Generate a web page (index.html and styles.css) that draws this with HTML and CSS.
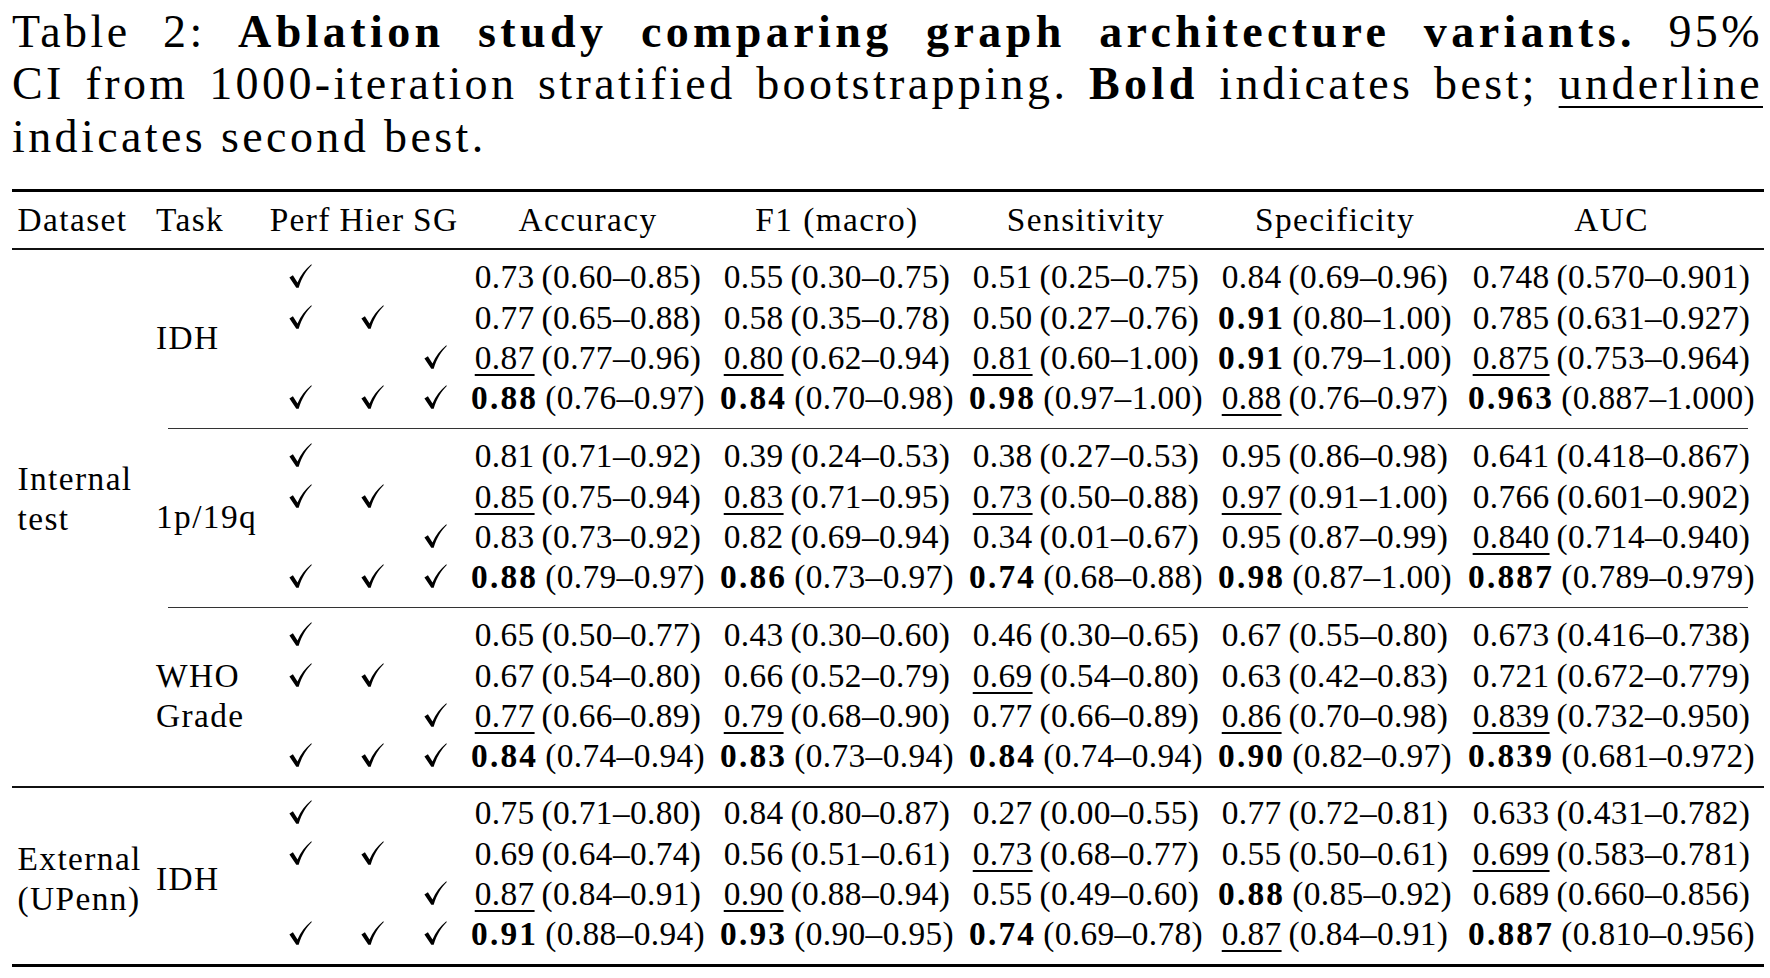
FILE: index.html
```html
<!DOCTYPE html>
<html lang="en">
<head>
    <meta charset="UTF-8">
    <title>Table 2: Ablation study</title>
    <link rel="stylesheet" href="styles.css">
</head>
<body>

<svg class="defs" aria-hidden="true">
    <symbol id="check" viewBox="0 0 23 24">
        <path d="M0.4 13.6 L3.9 11.3 L8.5 18.4 C11.6 11.4 16.2 5.0 22.3 0.2 L22.8 1.1 C17.2 6.6 12.6 14.2 9.7 23.7 L7.3 23.7 Z"/>
    </symbol>
</svg>

<div class="page">
    <p class="caption">
        <span class="line">Table 2: <b>Ablation study comparing graph architecture variants.</b> 95%</span>
        <span class="line">CI from 1000-iteration stratified bootstrapping. <b>Bold</b> indicates best; <u>underline</u></span>
        indicates second best.
    </p>

    <table class="results">
        <colgroup>
            <col class="c-dataset">
            <col class="c-task">
            <col class="c-perf">
            <col class="c-hier">
            <col class="c-sg">
            <col class="c-metric">
            <col class="c-metric">
            <col class="c-metric">
            <col class="c-metric">
            <col class="c-auc">
        </colgroup>
        <thead>
            <tr>
                <th class="lbl">Dataset</th>
                <th class="lbl">Task</th>
                <th class="mid">Perf</th>
                <th class="mid">Hier</th>
                <th class="mid">SG</th>
                <th class="mid">Accuracy</th>
                <th class="mid">F1 (macro)</th>
                <th class="mid">Sensitivity</th>
                <th class="mid">Specificity</th>
                <th class="mid">AUC</th>
            </tr>
        </thead>
        <tbody>
            <!-- Internal test / IDH -->
            <tr class="first">
                <td class="lbl internal" rowspan="14">Internal<br>test</td>
                <td class="lbl" rowspan="4">IDH</td>
                <td class="chk"><svg><use href="#check"/></svg></td><td class="chk"></td><td class="chk"></td>
                <td>0.73&thinsp;(0.60–0.85)</td>
                <td>0.55&thinsp;(0.30–0.75)</td>
                <td>0.51&thinsp;(0.25–0.75)</td>
                <td>0.84&thinsp;(0.69–0.96)</td>
                <td>0.748&thinsp;(0.570–0.901)</td>
            </tr>
            <tr>
                <td class="chk"><svg><use href="#check"/></svg></td><td class="chk"><svg><use href="#check"/></svg></td><td class="chk"></td>
                <td>0.77&thinsp;(0.65–0.88)</td>
                <td>0.58&thinsp;(0.35–0.78)</td>
                <td>0.50&thinsp;(0.27–0.76)</td>
                <td><b>0.91</b>&thinsp;(0.80–1.00)</td>
                <td>0.785&thinsp;(0.631–0.927)</td>
            </tr>
            <tr>
                <td class="chk"></td><td class="chk"></td><td class="chk"><svg><use href="#check"/></svg></td>
                <td><u>0.87</u>&thinsp;(0.77–0.96)</td>
                <td><u>0.80</u>&thinsp;(0.62–0.94)</td>
                <td><u>0.81</u>&thinsp;(0.60–1.00)</td>
                <td><b>0.91</b>&thinsp;(0.79–1.00)</td>
                <td><u>0.875</u>&thinsp;(0.753–0.964)</td>
            </tr>
            <tr>
                <td class="chk"><svg><use href="#check"/></svg></td><td class="chk"><svg><use href="#check"/></svg></td><td class="chk"><svg><use href="#check"/></svg></td>
                <td><b>0.88</b>&thinsp;(0.76–0.97)</td>
                <td><b>0.84</b>&thinsp;(0.70–0.98)</td>
                <td><b>0.98</b>&thinsp;(0.97–1.00)</td>
                <td><u>0.88</u>&thinsp;(0.76–0.97)</td>
                <td><b>0.963</b>&thinsp;(0.887–1.000)</td>
            </tr>
            <tr class="cmid"><td colspan="9"><div></div></td></tr>

            <!-- Internal test / 1p/19q -->
            <tr>
                <td class="lbl" rowspan="4">1p/19q</td>
                <td class="chk"><svg><use href="#check"/></svg></td><td class="chk"></td><td class="chk"></td>
                <td>0.81&thinsp;(0.71–0.92)</td>
                <td>0.39&thinsp;(0.24–0.53)</td>
                <td>0.38&thinsp;(0.27–0.53)</td>
                <td>0.95&thinsp;(0.86–0.98)</td>
                <td>0.641&thinsp;(0.418–0.867)</td>
            </tr>
            <tr>
                <td class="chk"><svg><use href="#check"/></svg></td><td class="chk"><svg><use href="#check"/></svg></td><td class="chk"></td>
                <td><u>0.85</u>&thinsp;(0.75–0.94)</td>
                <td><u>0.83</u>&thinsp;(0.71–0.95)</td>
                <td><u>0.73</u>&thinsp;(0.50–0.88)</td>
                <td><u>0.97</u>&thinsp;(0.91–1.00)</td>
                <td>0.766&thinsp;(0.601–0.902)</td>
            </tr>
            <tr>
                <td class="chk"></td><td class="chk"></td><td class="chk"><svg><use href="#check"/></svg></td>
                <td>0.83&thinsp;(0.73–0.92)</td>
                <td>0.82&thinsp;(0.69–0.94)</td>
                <td>0.34&thinsp;(0.01–0.67)</td>
                <td>0.95&thinsp;(0.87–0.99)</td>
                <td><u>0.840</u>&thinsp;(0.714–0.940)</td>
            </tr>
            <tr>
                <td class="chk"><svg><use href="#check"/></svg></td><td class="chk"><svg><use href="#check"/></svg></td><td class="chk"><svg><use href="#check"/></svg></td>
                <td><b>0.88</b>&thinsp;(0.79–0.97)</td>
                <td><b>0.86</b>&thinsp;(0.73–0.97)</td>
                <td><b>0.74</b>&thinsp;(0.68–0.88)</td>
                <td><b>0.98</b>&thinsp;(0.87–1.00)</td>
                <td><b>0.887</b>&thinsp;(0.789–0.979)</td>
            </tr>
            <tr class="cmid"><td colspan="9"><div></div></td></tr>

            <!-- Internal test / WHO Grade -->
            <tr>
                <td class="lbl" rowspan="4">WHO<br>Grade</td>
                <td class="chk"><svg><use href="#check"/></svg></td><td class="chk"></td><td class="chk"></td>
                <td>0.65&thinsp;(0.50–0.77)</td>
                <td>0.43&thinsp;(0.30–0.60)</td>
                <td>0.46&thinsp;(0.30–0.65)</td>
                <td>0.67&thinsp;(0.55–0.80)</td>
                <td>0.673&thinsp;(0.416–0.738)</td>
            </tr>
            <tr>
                <td class="chk"><svg><use href="#check"/></svg></td><td class="chk"><svg><use href="#check"/></svg></td><td class="chk"></td>
                <td>0.67&thinsp;(0.54–0.80)</td>
                <td>0.66&thinsp;(0.52–0.79)</td>
                <td><u>0.69</u>&thinsp;(0.54–0.80)</td>
                <td>0.63&thinsp;(0.42–0.83)</td>
                <td>0.721&thinsp;(0.672–0.779)</td>
            </tr>
            <tr>
                <td class="chk"></td><td class="chk"></td><td class="chk"><svg><use href="#check"/></svg></td>
                <td><u>0.77</u>&thinsp;(0.66–0.89)</td>
                <td><u>0.79</u>&thinsp;(0.68–0.90)</td>
                <td>0.77&thinsp;(0.66–0.89)</td>
                <td><u>0.86</u>&thinsp;(0.70–0.98)</td>
                <td><u>0.839</u>&thinsp;(0.732–0.950)</td>
            </tr>
            <tr>
                <td class="chk"><svg><use href="#check"/></svg></td><td class="chk"><svg><use href="#check"/></svg></td><td class="chk"><svg><use href="#check"/></svg></td>
                <td><b>0.84</b>&thinsp;(0.74–0.94)</td>
                <td><b>0.83</b>&thinsp;(0.73–0.94)</td>
                <td><b>0.84</b>&thinsp;(0.74–0.94)</td>
                <td><b>0.90</b>&thinsp;(0.82–0.97)</td>
                <td><b>0.839</b>&thinsp;(0.681–0.972)</td>
            </tr>
            <tr class="midrule"><td colspan="10"><div></div></td></tr>

            <!-- External (UPenn) / IDH -->
            <tr>
                <td class="lbl" rowspan="4">External<br>(UPenn)</td>
                <td class="lbl" rowspan="4">IDH</td>
                <td class="chk"><svg><use href="#check"/></svg></td><td class="chk"></td><td class="chk"></td>
                <td>0.75&thinsp;(0.71–0.80)</td>
                <td>0.84&thinsp;(0.80–0.87)</td>
                <td>0.27&thinsp;(0.00–0.55)</td>
                <td>0.77&thinsp;(0.72–0.81)</td>
                <td>0.633&thinsp;(0.431–0.782)</td>
            </tr>
            <tr>
                <td class="chk"><svg><use href="#check"/></svg></td><td class="chk"><svg><use href="#check"/></svg></td><td class="chk"></td>
                <td>0.69&thinsp;(0.64–0.74)</td>
                <td>0.56&thinsp;(0.51–0.61)</td>
                <td><u>0.73</u>&thinsp;(0.68–0.77)</td>
                <td>0.55&thinsp;(0.50–0.61)</td>
                <td><u>0.699</u>&thinsp;(0.583–0.781)</td>
            </tr>
            <tr>
                <td class="chk"></td><td class="chk"></td><td class="chk"><svg><use href="#check"/></svg></td>
                <td><u>0.87</u>&thinsp;(0.84–0.91)</td>
                <td><u>0.90</u>&thinsp;(0.88–0.94)</td>
                <td>0.55&thinsp;(0.49–0.60)</td>
                <td><b>0.88</b>&thinsp;(0.85–0.92)</td>
                <td>0.689&thinsp;(0.660–0.856)</td>
            </tr>
            <tr class="last">
                <td class="chk"><svg><use href="#check"/></svg></td><td class="chk"><svg><use href="#check"/></svg></td><td class="chk"><svg><use href="#check"/></svg></td>
                <td><b>0.91</b>&thinsp;(0.88–0.94)</td>
                <td><b>0.93</b>&thinsp;(0.90–0.95)</td>
                <td><b>0.74</b>&thinsp;(0.69–0.78)</td>
                <td><u>0.87</u>&thinsp;(0.84–0.91)</td>
                <td><b>0.887</b>&thinsp;(0.810–0.956)</td>
            </tr>
        </tbody>
    </table>
</div>

</body>
</html>
```

FILE: styles.css
```css
body {
    margin: 0;
    background-color: #fff;
    color: #000;
    font-family: 'Liberation Serif', 'Times New Roman', serif;
}
.defs {
    position: absolute;
    width: 0;
    height: 0;
    overflow: hidden;
}
.page {
    width: 1751px;
    padding: 5.5px 7px 0 12px;
}

/* caption */
.caption {
    margin: 0 0 26px 0;
    font-size: 46px;
    line-height: 52.5px;
    letter-spacing: 3.4px;
}
.caption .line {
    display: block;
    text-align: justify;
    text-align-last: justify;
}
.caption b {
    letter-spacing: 4.4px;
}
.caption u {
    text-underline-offset: 7px;
    text-decoration-thickness: 2px;
}

/* table, booktabs style */
.results {
    width: 1751px;
    table-layout: fixed;
    border-collapse: separate;
    border-spacing: 0;
    border-top: 3px solid #000;
    border-bottom: 3px solid #000;
    font-size: 33.4px;
    line-height: 40.25px;
    letter-spacing: 0.35px;
}
.c-dataset { width: 138.5px; }
.c-task { width: 114px; }
.c-perf { width: 71.5px; }
.c-hier { width: 72px; }
.c-sg { width: 55.5px; }
.c-metric { width: 249px; }
.c-auc { width: 304px; }

.results th {
    font-weight: normal;
    padding: 8px 0 8px 0;
    border-bottom: 2px solid #111;
    white-space: nowrap;
}
.results td {
    padding: 0;
    text-align: center;
    white-space: nowrap;
    vertical-align: middle;
}
.results th.lbl,
.results td.lbl {
    text-align: left;
    padding-left: 5.5px;
    letter-spacing: 1.4px;
}
.results th.mid {
    text-align: center;
    letter-spacing: 1.4px;
}
.results tr.first td {
    padding-top: 7px;
}
.results tr.last td {
    padding-bottom: 10px;
}
.results td.internal {
    padding-bottom: 36px;
}
.results td.chk svg {
    width: 23px;
    height: 24px;
    vertical-align: baseline;
    fill: #000;
}
.results b {
    letter-spacing: 2.2px;
}
.results u {
    text-underline-offset: 5px;
    text-decoration-thickness: 1.5px;
}

/* rules between task groups */
.results tr.cmid td,
.results tr.midrule td {
    padding: 0;
    font-size: 0;
    line-height: 0;
}
.results tr.cmid div {
    margin: 10px 16px 7px 17.5px;
    border-top: 1px solid #333;
}
.results tr.midrule div {
    margin: 10px 0 5px 0;
    border-top: 2px solid #111;
}
```
